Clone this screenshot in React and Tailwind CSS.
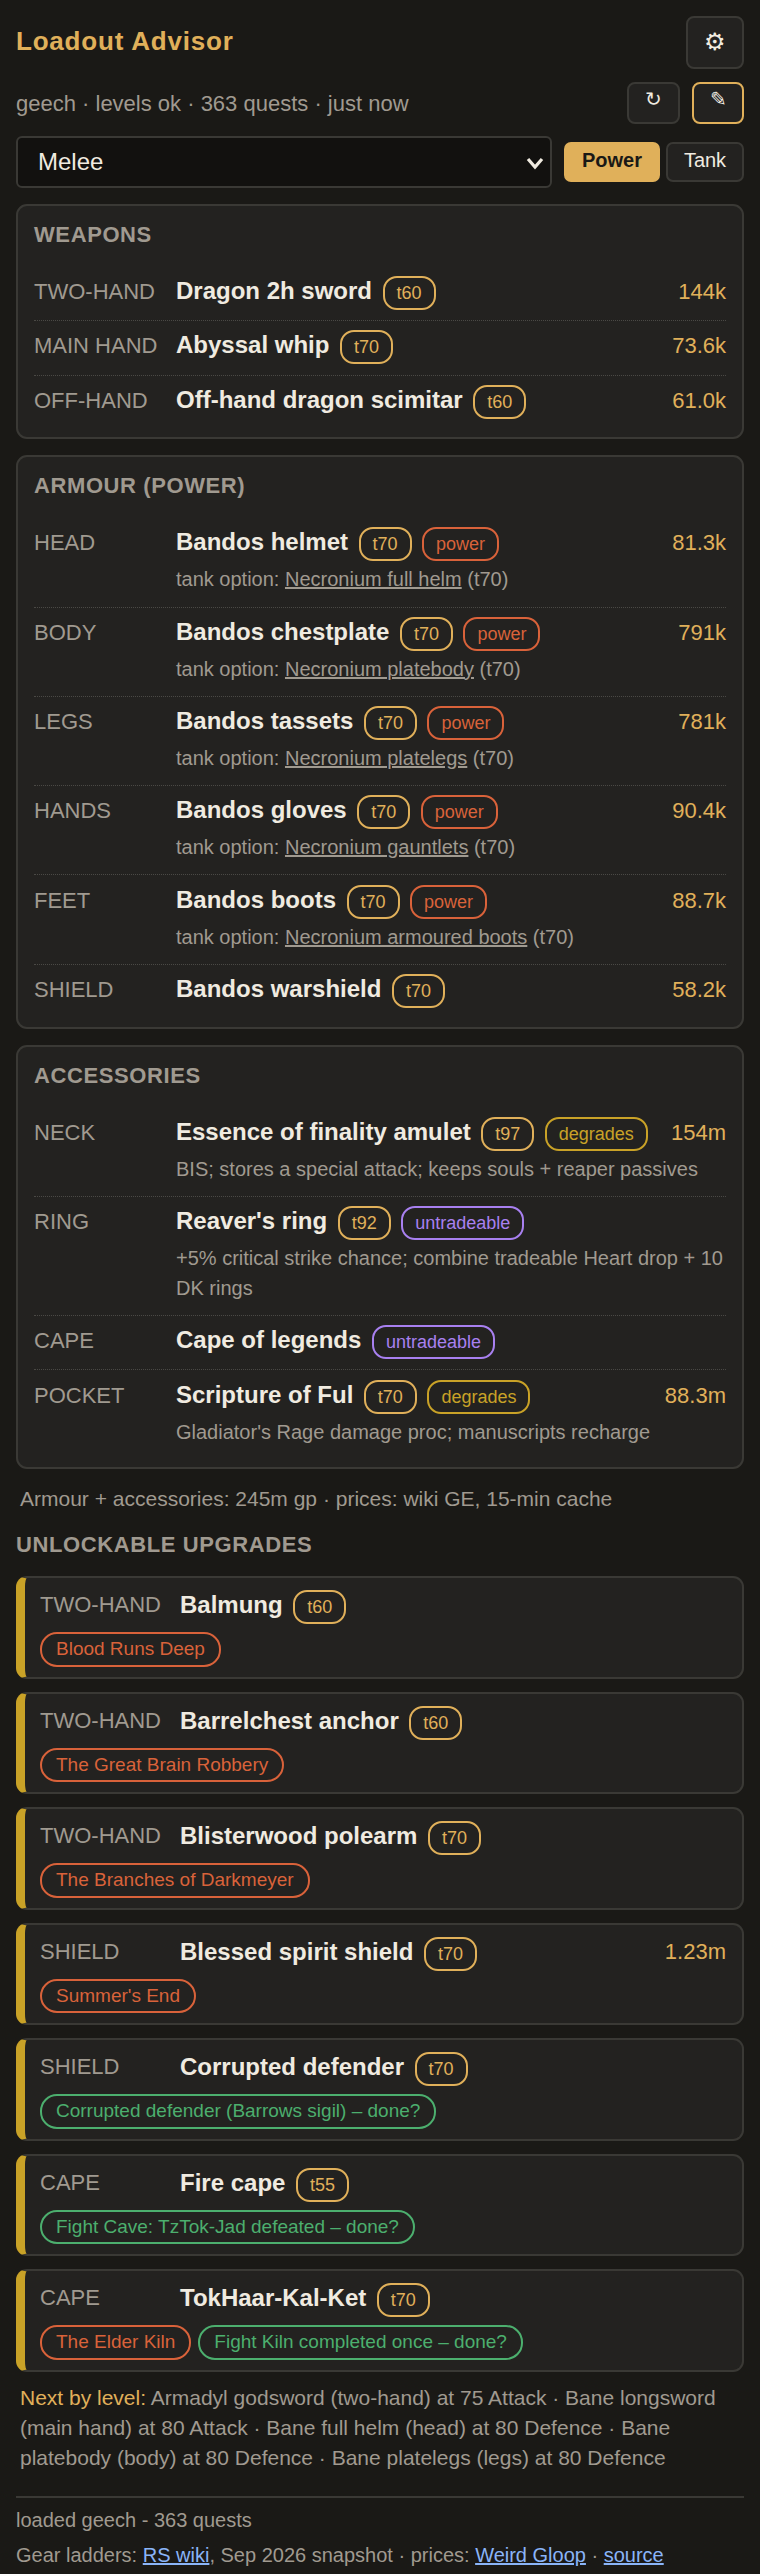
const tagStyles = {
  tier: 'border-[#e0b05a] text-[#e0b05a]',
  power: 'border-[#d9623a] text-[#d9623a]',
  degrades: 'border-[#c9a227] text-[#c9a227]',
  untradeable: 'border-[#a880f0] text-[#a880f0]',
};

const weapons = [
  { slot: 'TWO-HAND', name: 'Dragon 2h sword', tier: 't60', price: '144k' },
  { slot: 'MAIN HAND', name: 'Abyssal whip', tier: 't70', price: '73.6k' },
  { slot: 'OFF-HAND', name: 'Off-hand dragon scimitar', tier: 't60', price: '61.0k' },
];

const armour = [
  { slot: 'HEAD', name: 'Bandos helmet', tier: 't70', tags: ['power'], tank: 'Necronium full helm', price: '81.3k' },
  { slot: 'BODY', name: 'Bandos chestplate', tier: 't70', tags: ['power'], tank: 'Necronium platebody', price: '791k' },
  { slot: 'LEGS', name: 'Bandos tassets', tier: 't70', tags: ['power'], tank: 'Necronium platelegs', price: '781k' },
  { slot: 'HANDS', name: 'Bandos gloves', tier: 't70', tags: ['power'], tank: 'Necronium gauntlets', price: '90.4k' },
  { slot: 'FEET', name: 'Bandos boots', tier: 't70', tags: ['power'], tank: 'Necronium armoured boots', price: '88.7k' },
  { slot: 'SHIELD', name: 'Bandos warshield', tier: 't70', price: '58.2k' },
];

const accessories = [
  { slot: 'NECK', name: 'Essence of finality amulet', tier: 't97', tags: ['degrades'], note: 'BIS; stores a special attack; keeps souls + reaper passives', price: '154m' },
  { slot: 'RING', name: "Reaver's ring", tier: 't92', tags: ['untradeable'], note: '+5% critical strike chance; combine tradeable Heart drop + 10 DK rings' },
  { slot: 'CAPE', name: 'Cape of legends', tags: ['untradeable'] },
  { slot: 'POCKET', name: 'Scripture of Ful', tier: 't70', tags: ['degrades'], note: "Gladiator's Rage damage proc; manuscripts recharge", price: '88.3m' },
];

const upgrades = [
  { slot: 'TWO-HAND', name: 'Balmung', tier: 't60', quests: ['Blood Runs Deep'] },
  { slot: 'TWO-HAND', name: 'Barrelchest anchor', tier: 't60', quests: ['The Great Brain Robbery'] },
  { slot: 'TWO-HAND', name: 'Blisterwood polearm', tier: 't70', quests: ['The Branches of Darkmeyer'] },
  { slot: 'SHIELD', name: 'Blessed spirit shield', tier: 't70', price: '1.23m', quests: ["Summer's End"] },
  { slot: 'SHIELD', name: 'Corrupted defender', tier: 't70', done: ['Corrupted defender (Barrows sigil) – done?'] },
  { slot: 'CAPE', name: 'Fire cape', tier: 't55', done: ['Fight Cave: TzTok-Jad defeated – done?'] },
  { slot: 'CAPE', name: 'TokHaar-Kal-Ket', tier: 't70', quests: ['The Elder Kiln'], done: ['Fight Kiln completed once – done?'] },
];

const Tag = ({ kind, children }) => (
  <span className={`inline-block ml-[10.5px] px-[12px] py-[3px] rounded-[14px] border-2 text-[18px] leading-[24px] font-normal ${tagStyles[kind]}`}>
    {children}
  </span>
);

const ItemRow = ({ item }) => (
  <div className="grid grid-cols-[142px_1fr_auto] pt-[9.15px] pb-[10.15px] border-b border-dotted border-[#4a4945] last:border-b-0">
    <div className="text-[22px] leading-[32px] text-[#a09a90]">{item.slot}</div>
    <div className="-mt-[1px] min-w-0 text-[24px] leading-[32px] font-bold text-[#f0ebe0]">
      {item.name}
      {item.tier && <Tag kind="tier">{item.tier}</Tag>}
      {item.tags?.map(t => <Tag key={t} kind={t}>{t}</Tag>)}
    </div>
    <div className="pl-[16px] text-[22px] leading-[32px] text-[#e0b05a]">{item.price}</div>
    {item.tank && (
      <div className="col-start-2 col-span-2 mt-[3px] mb-[2px] text-[20px] leading-[30px] text-[#a09a90]">
        tank option: <span className="underline">{item.tank}</span> (t70)
      </div>
    )}
    {item.note && <div className="col-start-2 col-span-2 mt-[3px] mb-[2px] text-[20px] leading-[30px] text-[#a09a90]">{item.note}</div>}
  </div>
);

const Card = ({ title, items }) => (
  <section className="mb-[16px] rounded-[11px] border-2 border-[#3a3935] bg-[#232220] px-[16px] pt-[14px] pb-[8.5px]">
    <h2 className="mb-[17px] text-[22px] leading-[30px] font-bold tracking-[0.6px] text-[#a09a90]">{title}</h2>
    {items.map(it => <ItemRow key={it.slot} item={it} />)}
  </section>
);

const Chip = ({ green, children }) => (
  <span className={`px-[14px] py-[1.25px] rounded-[17px] border-2 text-[19px] leading-[28px] ${green ? 'border-[#4caf6e] text-[#4caf6e]' : 'border-[#d9623a] text-[#d9623a]'}`}>
    {children}
  </span>
);

const UpgradeCard = ({ u }) => (
  <div className="mb-[13px] rounded-[11px] border-2 border-l-[9px] border-[#3a3935] border-l-[#c9a227] bg-[#232220] pl-[15px] pr-[16px] pt-[11px] pb-[10px]">
    <div className="flex items-start">
      <div className="w-[140px] shrink-0 text-[22px] leading-[32px] text-[#a09a90]">{u.slot}</div>
      <div className="flex-1 text-[24px] leading-[32px] font-bold text-[#f0ebe0]">
        {u.name}
        <Tag kind="tier">{u.tier}</Tag>
      </div>
      {u.price && <div className="text-[22px] leading-[32px] text-[#e0b05a]">{u.price}</div>}
    </div>
    <div className="mt-[8px] flex flex-wrap gap-[7px]">
      {u.quests?.map(q => <Chip key={q}>{q}</Chip>)}
      {u.done?.map(q => <Chip key={q} green>{q}</Chip>)}
    </div>
  </div>
);

export default function App() {
  return (
    <div className="min-h-screen bg-[#1a1916] px-[16px] pt-[16px] text-[#f0ebe0] font-['Liberation_Sans',sans-serif]">
      <header className="flex items-start justify-between">
        <h1 className="mt-[8px] text-[26px] leading-[34px] font-bold tracking-[0.8px] text-[#e0b05a]">Loadout Advisor</h1>
        <button className="w-[58px] h-[53px] pb-[2px] rounded-[8px] border-2 border-[#3a3935] bg-[#232220] text-[24px]">⚙</button>
      </header>

      <div className="mt-[13px] flex items-center justify-between">
        <span className="text-[22px] text-[#a09a90]">geech · levels ok · 363 quests · just now</span>
        <div className="flex gap-[12px]">
          <button className="w-[53px] h-[42px] pb-[8px] rounded-[8px] border-2 border-[#3a3935] bg-[#232220] text-[20px]">↻</button>
          <button className="w-[52px] h-[42px] pb-[10px] rounded-[8px] border-2 border-[#e0b05a] bg-[#232220] text-[20px]">✎</button>
        </div>
      </div>

      <div className="mt-[12px] flex items-center gap-[6px]">
        <div className="relative mr-[6px] flex-1">
          <select className="block h-[52px] w-full appearance-none rounded-[6px] border-2 border-[#3a3935] bg-[#12110f] px-[20px] text-[24px] text-[#f0ebe0]">
            <option>Melee</option>
          </select>
          <svg className="absolute right-[8px] top-[19px] w-[18px] h-[16px]" viewBox="0 0 18 16" fill="none" stroke="#f0ebe0" strokeWidth="3.2">
            <path d="M2 4l7 8 7-8" />
          </svg>
        </div>
        <button className="w-[96px] h-[40px] pb-[4px] rounded-[7px] bg-[#e0b05a] text-[20px] font-bold text-[#1a1916]">Power</button>
        <button className="w-[78px] h-[40px] pb-[4px] rounded-[7px] border-2 border-[#3a3935] bg-[#232220] text-[20px]">Tank</button>
      </div>

      <div className="mt-[16px]">
        <Card title="WEAPONS" items={weapons} />
        <Card title="ARMOUR (POWER)" items={armour} />
        <Card title="ACCESSORIES" items={accessories} />
      </div>

      <p className="px-[4px] text-[21px] leading-[28px] text-[#a09a90]">Armour + accessories: 245m gp · prices: wiki GE, 15-min cache</p>

      <h2 className="mt-[17px] mb-[16px] text-[22px] leading-[30px] font-bold tracking-[0.6px] text-[#a09a90]">UNLOCKABLE UPGRADES</h2>
      {upgrades.map(u => <UpgradeCard key={u.name} u={u} />)}

      <p className="-mt-[2px] px-[4px] text-[21px] leading-[30px] text-[#a09a90]">
        <span className="text-[#e0b05a]">Next by level:</span> Armadyl godsword (two-hand) at 75 Attack · Bane longsword (main hand) at 80 Attack · Bane full helm (head) at 80 Defence · Bane platebody (body) at 80 Defence · Bane platelegs (legs) at 80 Defence
      </p>

      <footer className="mt-[23px] border-t-2 border-[#3a3935] pt-[5px] text-[20px] leading-[35px] text-[#a09a90]">
        <div>loaded geech - 363 quests</div>
        <div>
          Gear ladders: <a className="text-[#8ab4f8] underline">RS wiki</a>, Sep 2026 snapshot · prices: <a className="text-[#8ab4f8] underline">Weird Gloop</a> · <a className="text-[#8ab4f8] underline">source</a>
        </div>
      </footer>
    </div>
  );
}
